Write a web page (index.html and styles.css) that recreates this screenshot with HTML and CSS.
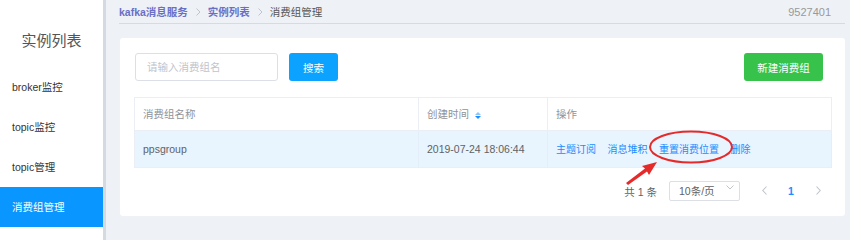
FILE: index.html
```html
<!DOCTYPE html>
<html lang="zh-CN">
<head>
  <meta charset="UTF-8">
  <title>消费组管理</title>
  <link rel="stylesheet" href="styles.css">
</head>
<body>
  <div class="sidebar">
    <div class="side-title">实例列表</div>
    <div class="side-item">broker监控</div>
    <div class="side-item">topic监控</div>
    <div class="side-item">topic管理</div>
    <div class="side-item active">消费组管理</div>
  </div>

  <div class="main">
    <div class="breadcrumb">
      <span class="crumb link">kafka消息服务</span>
      <span class="sep"><svg width="5" height="8" viewBox="0 0 5 8"><path d="M0.5 0.5 L4 4 L0.5 7.5" fill="none" stroke="#c0c4cc" stroke-width="1"/></svg></span>
      <span class="crumb link">实例列表</span>
      <span class="sep"><svg width="5" height="8" viewBox="0 0 5 8"><path d="M0.5 0.5 L4 4 L0.5 7.5" fill="none" stroke="#c0c4cc" stroke-width="1"/></svg></span>
      <span class="crumb">消费组管理</span>
      <span class="user-id">9527401</span>
    </div>

    <div class="card">
      <div class="toolbar">
        <input type="text" class="search-input" placeholder="请输入消费组名">
        <button class="btn btn-blue">搜索</button>
        <button class="btn btn-green">新建消费组</button>
      </div>

      <table class="table">
        <thead>
          <tr>
            <th class="col-name">消费组名称</th>
            <th class="col-time">创建时间 <span class="sort"><i class="up"></i><i class="down"></i></span></th>
            <th>操作</th>
          </tr>
        </thead>
        <tbody>
          <tr class="hover">
            <td>ppsgroup</td>
            <td>2019-07-24 18:06:44</td>
            <td class="ops">
              <a>主题订阅</a><a>消息堆积</a><a>重置消费位置</a><a>删除</a>
            </td>
          </tr>
        </tbody>
      </table>

      <div class="pager">
        <span class="total">共 1 条</span>
        <div class="size-select">10条/页
          <svg class="chev" width="8" height="5" viewBox="0 0 8 5"><path d="M0.5 0.5 L4 4 L7.5 0.5" fill="none" stroke="#c0c4cc" stroke-width="1"/></svg>
        </div>
        <span class="page-btn">
          <svg width="5" height="9" viewBox="0 0 5 9"><path d="M4.5 0.5 L0.8 4.5 L4.5 8.5" fill="none" stroke="#c0c4cc" stroke-width="1.1"/></svg>
        </span>
        <span class="page-num">1</span>
        <span class="page-btn">
          <svg width="5" height="9" viewBox="0 0 5 9"><path d="M0.5 0.5 L4.2 4.5 L0.5 8.5" fill="none" stroke="#c0c4cc" stroke-width="1.1"/></svg>
        </span>
      </div>
    </div>
  </div>

  <!-- annotation drawn over the screenshot -->
  <svg class="markup" width="850" height="240" viewBox="0 0 850 240">
    <ellipse cx="691" cy="147" rx="41" ry="15.5" fill="none" stroke="#e62a2a" stroke-width="2"/>
    <polygon points="626,183 645,168.5 642,166 657,162 649,175 647,171.5 628,185" fill="#e62a2a"/>
  </svg>
</body>
</html>
```

FILE: styles.css
```css
body {
  margin: 0;
  width: 850px;
  height: 240px;
  display: flex;
  background: #eef1f6;
  font-family: "Liberation Sans", "Noto Sans CJK SC", sans-serif;
  font-size: 10.5px;
  color: #606266;
  position: relative;
  overflow: hidden;
}
.sidebar {
  width: 103px;
  height: 240px;
  background: white;
  border-right: 3px solid #d5d9e0;
  flex-shrink: 0;
}
.side-title {
  height: 67px;
  box-sizing: border-box;
  padding-top: 30px;
  line-height: 22px;
  text-align: center;
  font-size: 15px;
  color: #555;
}
.side-item {
  height: 40px;
  line-height: 40px;
  padding-left: 12px;
  font-size: 10.5px;
  color: #333;
}
.side-item.active { background: #0a96ff; color: white; }

.main {
  flex: 1;
  padding: 0 5px 0 13px;
}
.breadcrumb {
  height: 23px;
  display: flex;
  align-items: center;
  border-bottom: 1px solid #d6dae2;
  color: #555;
}
.crumb.link { color: #6a6fc6; font-weight: bold; }
.sep { margin: 0 7px 0 8px; display: flex; }
.user-id { margin-left: auto; margin-right: 14px; color: #999; font-size: 11px; }

.card {
  margin: 14px 0 0 1px;
  background: white;
  border-radius: 3px;
  padding: 15px 13px 15px 14px;
}
.toolbar {
  display: flex;
  align-items: center;
  margin: 0 9px 16px 1px;
}
.search-input {
  width: 143px;
  height: 28px;
  box-sizing: border-box;
  border: 1px solid #dcdfe6;
  border-radius: 3px;
  padding: 0 11px;
  font-family: inherit;
  font-size: 10.5px;
}
.search-input::placeholder { color: #c0c4cc; }
.btn {
  height: 28px;
  border: none;
  border-radius: 3px;
  color: white;
  font-family: inherit;
  font-size: 10.5px;
  cursor: pointer;
}
.btn-blue { background: #0ba3ff; width: 49px; margin-left: 11px; }
.btn-green { background: #37c34b; width: 79px; margin-left: auto; }

.table {
  width: 698px;
  table-layout: fixed;
  border-collapse: collapse;
  border: 1px solid #ebeef5;
}
.table th {
  height: 31px;
  padding: 0 8px 1px;
  text-align: left;
  font-weight: normal;
  color: #909399;
  border-bottom: 1px solid #ebeef5;
  border-right: 1px solid #ebeef5;
}
.table td {
  height: 35px;
  padding: 0 8px 1px;
  border-right: 1px solid #e4eef8;
  white-space: nowrap;
}
.table tr.hover td { background: #e8f4fe; }
.col-name { width: 284px; box-sizing: border-box; }
.col-time { width: 129px; box-sizing: border-box; }
.sort {
  display: inline-flex;
  flex-direction: column;
  gap: 1px;
  vertical-align: middle;
  margin-left: 3px;
}
.sort i { width: 0; height: 0; border-left: 3px solid transparent; border-right: 3px solid transparent; }
.sort .up { border-bottom: 3.5px solid #8cc4ff; }
.sort .down { border-top: 3.5px solid #1890ff; }
.ops a { color: #1a8cff; font-size: 10px; margin-right: 11.5px; }

.pager {
  display: flex;
  align-items: center;
  justify-content: flex-end;
  margin-top: 13px;
  padding-right: 3px;
  height: 20px;
  color: #606266;
}
.total { margin-right: 12px; }
.size-select {
  width: 71px;
  height: 20px;
  box-sizing: border-box;
  border: 1px solid #dcdfe6;
  border-radius: 2px;
  padding-left: 9px;
  line-height: 18px;
  position: relative;
  margin-right: 13px;
}
.chev { position: absolute; right: 5px; top: 3px; }
.page-btn { width: 22px; text-align: center; line-height: 10px; }
.page-num { width: 22px; text-align: center; color: #1890ff; font-weight: bold; margin: 0 5px; }

.markup {
  position: absolute;
  left: 0;
  top: 0;
  pointer-events: none;
}
```
